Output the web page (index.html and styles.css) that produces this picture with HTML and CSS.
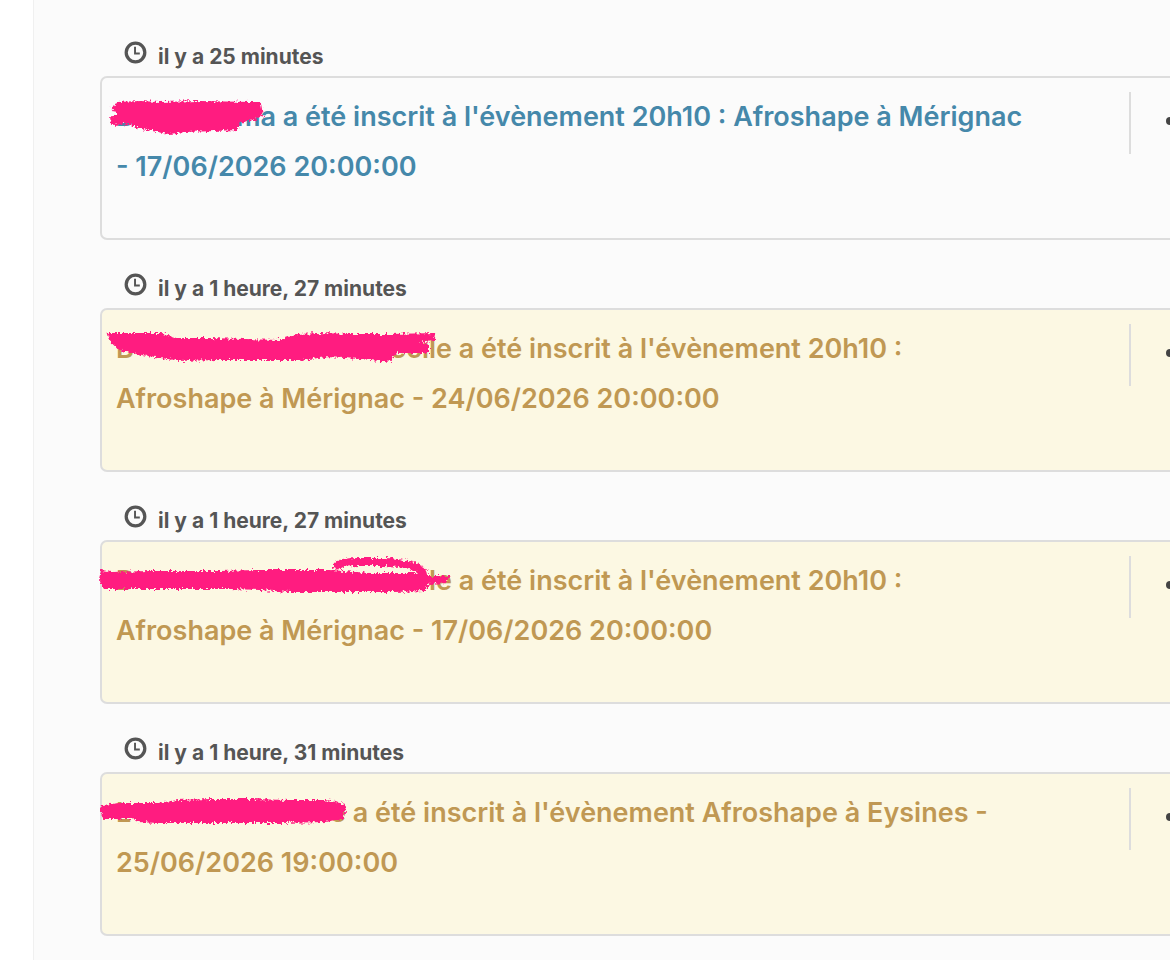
FILE: index.html
```html
<!DOCTYPE html>
<html lang="fr">
<head>
    <meta charset="UTF-8">
    <meta name="viewport" content="width=device-width, initial-scale=1.0">
    <title>Notifications</title>
    <link rel="stylesheet" href="styles.css">
</head>
<body>
    <svg class="defs" width="0" height="0" aria-hidden="true">
        <filter id="crayon" x="-5%" y="-20%" width="110%" height="140%">
            <feTurbulence type="fractalNoise" baseFrequency="0.35" numOctaves="3" seed="4" result="noise"/>
            <feDisplacementMap in="SourceGraphic" in2="noise" scale="7" xChannelSelector="R" yChannelSelector="G"/>
        </filter>
        <symbol id="clock" viewBox="0 0 24 24">
            <circle cx="12" cy="12" r="9.7" fill="none" stroke="currentColor" stroke-width="3.4"/>
            <path d="M11.500 6v7h5" fill="none" stroke="currentColor" stroke-width="2"/>
        </symbol>
        <symbol id="dots" viewBox="0 0 32 8">
            <circle cx="4" cy="4" r="4"/>
            <circle cx="16" cy="4" r="4"/>
            <circle cx="28" cy="4" r="4"/>
        </symbol>
    </svg>
    <main class="feed">
        <article class="item">
            <div class="time"><svg class="clock"><use href="#clock"/></svg><time>il y a 25 minutes</time></div>
            <div class="card info">
                <p class="message"><span class="name short"><span>B</span><span>ma</span></span> a été inscrit à l'évènement 20h10 : Afroshape à Mérignac - 17/06/2026 20:00:00</p>
                <div class="actions"><button type="button" aria-label="Options"><svg class="dots"><use href="#dots"/></svg></button></div>
                <svg class="scribble" viewBox="0 0 380 80" aria-hidden="true">
                    <path d="M17 27L40 26L60 27L100 26L150 27L160 27L162 39L152 43L139 46L137 53L115 54L85 55L69 57L52 54L38 51L28 47L12 48L11 42L18 38L13 32Z"/>
                </svg>
            </div>
        </article>
        <article class="item">
            <div class="time"><svg class="clock"><use href="#clock"/></svg><time>il y a 1 heure, 27 minutes</time></div>
            <div class="card warning">
                <p class="message"><span class="name long"><span>B</span><span>ecile</span></span> a été inscrit à l'évènement 20h10 : Afroshape à Mérignac - 24/06/2026 20:00:00</p>
                <div class="actions"><button type="button" aria-label="Options"><svg class="dots"><use href="#dots"/></svg></button></div>
                <svg class="scribble" viewBox="0 0 380 80" aria-hidden="true">
                    <path d="M9 26L30 26L62 26L76 31L110 31L145 32L180 33L198 27L220 26L250 27L290 27L334 26L333 32L316 34L328 37L328 44L295 44L290 53L260 50L228 48L200 51L150 51L120 51L78 52L62 49L36 45L19 41L11 33Z"/>
                </svg>
            </div>
        </article>
        <article class="item">
            <div class="time"><svg class="clock"><use href="#clock"/></svg><time>il y a 1 heure, 27 minutes</time></div>
            <div class="card warning">
                <p class="message"><span class="name long"><span>D</span><span>le</span></span> a été inscrit à l'évènement 20h10 : Afroshape à Mérignac - 17/06/2026 20:00:00</p>
                <div class="actions"><button type="button" aria-label="Options"><svg class="dots"><use href="#dots"/></svg></button></div>
                <svg class="scribble" viewBox="0 0 380 80" aria-hidden="true">
                    <path d="M2 31L12 33L50 32L90 32L120 32L155 31L230 31L270 34L320 34L326 37L348 37L346 42L328 43L325 50L295 51L245 51L190 51L160 49L130 48L80 48L30 48L4 48L0 39Z"/>
                    <path class="loop" d="M237 26Q238 22 260 22L284 22Q310 23 321 30Q326 34 323 44"/>
                </svg>
            </div>
        </article>
        <article class="item">
            <div class="time"><svg class="clock"><use href="#clock"/></svg><time>il y a 1 heure, 31 minutes</time></div>
            <div class="card warning">
                <p class="message"><span class="name medium"><span>L</span><span>e</span></span> a été inscrit à l'évènement Afroshape à Eysines - 25/06/2026 19:00:00</p>
                <div class="actions"><button type="button" aria-label="Options"><svg class="dots"><use href="#dots"/></svg></button></div>
                <svg class="scribble" viewBox="0 0 380 80" aria-hidden="true">
                    <path d="M2 34L20 32L58 32L78 29L110 28L150 28L190 29L225 29L245 33L243 46L225 49L180 50L130 50L100 50L58 50L38 49L33 46L4 46L1 38Z"/>
                </svg>
            </div>
        </article>
    </main>
</body>
</html>
```
FILE: styles.css
```css
body {
    margin: 0;
    background: #fff;
    font-family: Inter, "Liberation Sans", sans-serif;
    font-weight: 600;
    font-optical-sizing: none;
}
.defs {
    position: absolute;
}
.feed {
    margin-left: 33px;
    padding: 36px 0 0 66px;
    min-height: 100vh;
    box-sizing: border-box;
    border-left: 1px solid #f0f0f0;
    background: #fbfbfb;
    overflow: hidden;
}
.item {
    margin-bottom: 28px;
}
.time {
    display: flex;
    align-items: center;
    gap: 11px;
    height: 40px;
    padding-left: 24px;
    color: #555;
    font-size: 21px;
    font-weight: 700;
}
.clock {
    width: 23px;
    height: 23px;
    margin-bottom: 7px;
}
.card {
    position: relative;
    display: flex;
    justify-content: space-between;
    width: calc(100% + 60px);
    box-sizing: border-box;
    padding: 14px 30px 46px 14px;
    border: 2px solid #ddd;
    border-radius: 7px;
}
.info {
    color: #4588aa;
}
.warning {
    background: #fcf8e3;
    color: #c09853;
}
.message {
    flex: 1;
    max-width: 920px;
    margin: 0;
    font-size: 27px;
    line-height: 50px;
}
.name {
    display: inline-flex;
    justify-content: space-between;
}
.short {
    width: 160px;
}
.medium {
    width: 230px;
}
.long {
    width: 336px;
}
.actions {
    display: flex;
    align-items: center;
    height: 62px;
    padding-left: 35px;
    border-left: 2px solid #ddd;
}
.actions button {
    display: flex;
    padding: 0;
    border: none;
    background: none;
    color: #444;
    cursor: pointer;
}
.dots {
    width: 32px;
    height: 8px;
    margin-bottom: 4px;
    fill: currentColor;
}
/* pink marker over the names */
.scribble {
    position: absolute;
    top: -2px;
    left: -2px;
    width: 380px;
    height: 80px;
    overflow: visible;
    fill: #ff1c80;
    stroke: #ff1c80;
    stroke-width: 2px;
    filter: url(#crayon);
    pointer-events: none;
}
.loop {
    fill: none;
    stroke-width: 8px;
    stroke-linecap: round;
}
```
